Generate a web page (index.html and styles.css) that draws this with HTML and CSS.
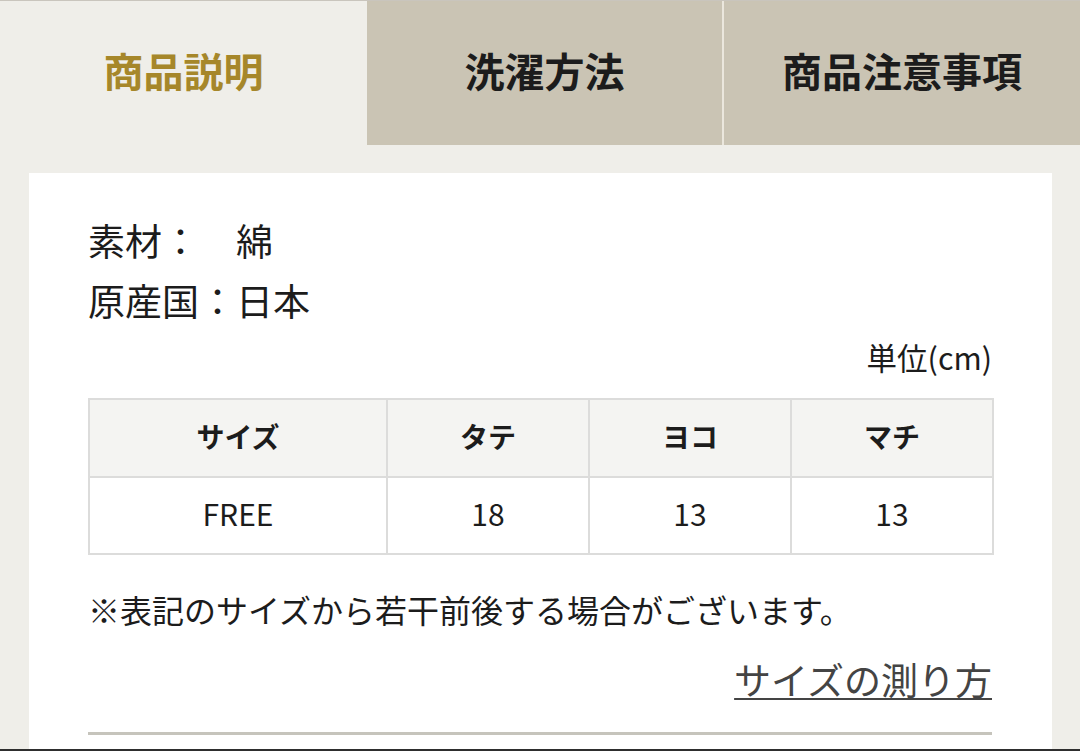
FILE: index.html
```html
<!DOCTYPE html>
<html lang="ja">
<head>
<meta charset="utf-8">
<link rel="stylesheet" href="styles.css">
</head>
<body>
<div class="page">
  <nav class="tabs">
    <div class="tab active">商品説明</div>
    <div class="tab">洗濯方法</div>
    <div class="tab">商品注意事項</div>
  </nav>
  <section class="card">
    <p class="spec">素材：　綿</p>
    <p class="spec">原産国：日本</p>
    <p class="unit">単位(cm)</p>
    <table class="size-table">
      <colgroup>
        <col class="c1"><col class="c2"><col class="c2"><col class="c2">
      </colgroup>
      <thead>
        <tr><th>サイズ</th><th>タテ</th><th>ヨコ</th><th>マチ</th></tr>
      </thead>
      <tbody>
        <tr><td>FREE</td><td>18</td><td>13</td><td>13</td></tr>
      </tbody>
    </table>
    <p class="note">※表記のサイズから若干前後する場合がございます。</p>
    <p class="link-row"><a class="measure" href="#">サイズの測り方</a></p>
    <hr class="rule">
  </section>
</div>
<div class="bottom-edge"></div>
</body>
</html>
```
FILE: styles.css
```css
html, body {
  margin: 0;
  padding: 0;
}
body {
  background: #efeee9;
  font-family: "Noto Sans CJK JP", "Noto Sans", sans-serif;
  color: #1c1c1c;
  height: 751px;
  overflow: hidden;
  position: relative;
}
.page {
  border-top: 1px solid #c9c5bd;
}
.tabs {
  display: flex;
  height: 144px;
}
.tab {
  display: flex;
  align-items: center;
  justify-content: center;
  font-size: 40px;
  font-weight: 700;
  background: #cac4b4;
  color: #1c1c1c;
  padding-bottom: 6px;
  box-sizing: border-box;
}
.tab:nth-child(1) { width: 367px; }
.tab:nth-child(2) { width: 355px; }
.tab:nth-child(3) { flex: 1; border-left: 2px solid #ebe7dd; }
.tab.active {
  background: #efeee9;
  color: #a6872a;
}
.card {
  background: #ffffff;
  margin: 28px 28px 0 29px;
  padding: 37px 60px 40px 59px;
}
.spec {
  margin: 0;
  font-size: 37px;
  line-height: 60px;
}
.unit {
  margin: 9px 0 0;
  text-align: right;
  font-size: 30.5px;
  line-height: 36px;
}
.size-table {
  margin-top: 23px;
  width: 100%;
  border-collapse: collapse;
  table-layout: fixed;
}
.size-table col.c1 { width: 298px; }
.size-table col.c2 { width: 202px; }
.size-table th,
.size-table td {
  border: 2px solid #dcdcdb;
  text-align: center;
  padding: 0 0 5px;
}
.size-table th {
  background: #f4f4f2;
  height: 71px;
  font-size: 28px;
  font-weight: 700;
}
.size-table td {
  height: 70px;
  font-size: 30px;
  font-weight: 400;
}
.note {
  margin: 31px 0 0;
  font-size: 32px;
  line-height: 46px;
}
.link-row {
  margin: 22px 0 0;
  text-align: right;
  line-height: 50px;
}
.measure {
  font-size: 37px;
  color: #444444;
  text-decoration: underline;
  text-decoration-thickness: 2px;
  text-underline-offset: 3px;
}
.rule {
  margin: 19px 0 0;
  border: 0;
  height: 3px;
  background: #c6c4bc;
}
.bottom-edge {
  position: absolute;
  left: 0;
  right: 0;
  bottom: 0;
  height: 2px;
  background: #2e2e2e;
}
```
